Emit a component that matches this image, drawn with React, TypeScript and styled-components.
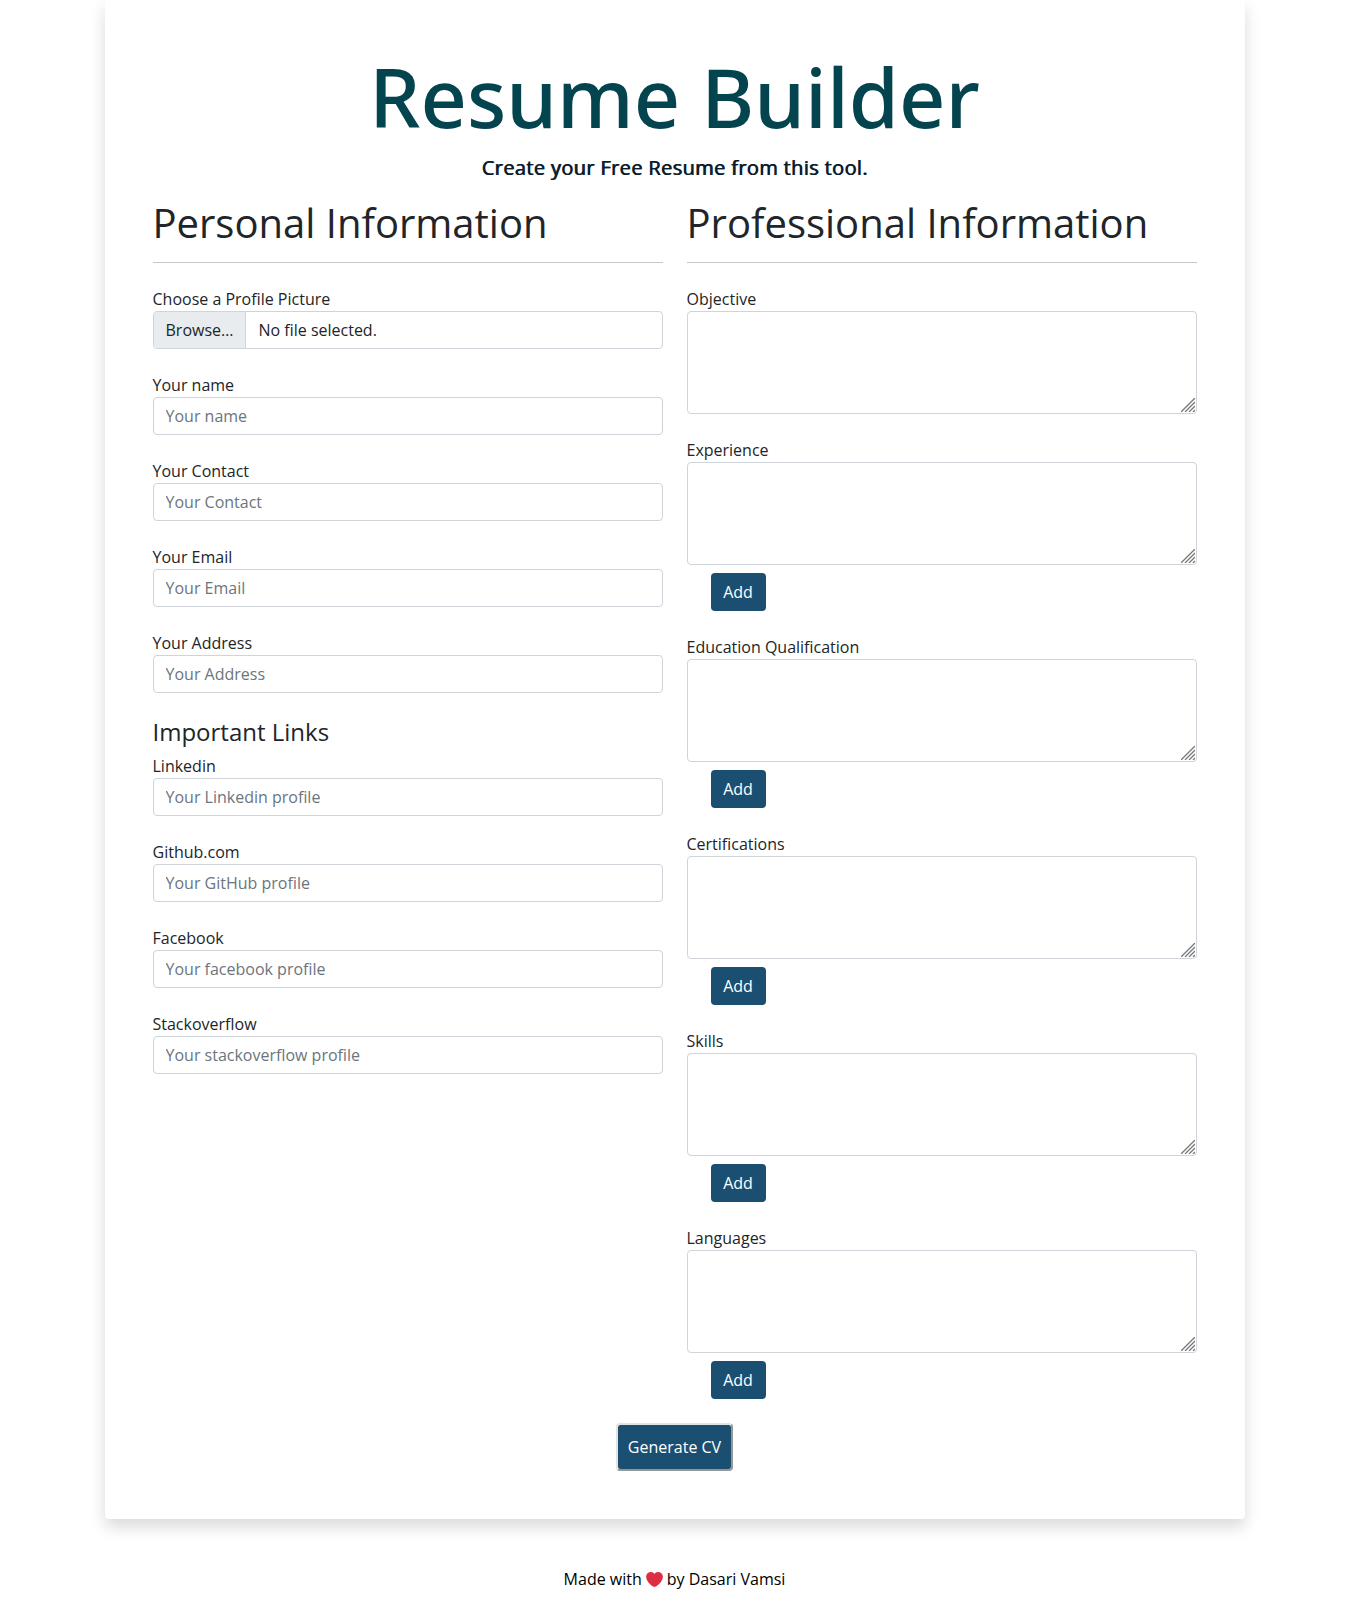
import React from 'react';
import styled, { createGlobalStyle } from 'styled-components';

const GlobalStyle = createGlobalStyle`
  *, *::before, *::after { box-sizing: border-box; }
  body {
    margin: 0;
    background: #fff;
    color: #212529;
    font-family: "Open Sans", "Noto Sans", sans-serif;
    font-size: 16px;
    line-height: 1.5;
  }
`;

const Card = styled.main`
  width: 1140px;
  margin: 0 auto;
  padding: 48px;
  border-radius: 4px;
  background: #fff;
  box-shadow: 0 8px 16px rgba(0, 0, 0, 0.15);
`;

const Title = styled.h1`
  margin: 0 0 8px;
  color: #03444f;
  font-family: "Noto Sans", "Open Sans", sans-serif;
  font-size: 81px;
  font-weight: 500;
  line-height: 97px;
  text-align: center;
`;

const Subtitle = styled.p`
  margin: 0 0 16px;
  color: #0b1c2c;
  font-size: 20px;
  font-weight: 400;
  letter-spacing: 0.36px;
  line-height: 30px;
  text-align: center;
  text-shadow: 0.8px 0 0 #0b1c2c;
`;

const Columns = styled.div`
  display: grid;
  grid-template-columns: 1fr 1fr;
  column-gap: 24px;
`;

const Column = styled.section`
  min-width: 0;
`;

const ColumnTitle = styled.h2`
  margin: 0 0 24px;
  padding-bottom: 15px;
  border-bottom: 1px solid #c7c8c9;
  font-size: 40px;
  font-weight: 400;
  line-height: 48px;
`;

const LinksTitle = styled.h3`
  margin: 0 0 6px;
  font-size: 24px;
  font-weight: 400;
  line-height: 30.8px;
`;

const Field = styled.div`
  display: flex;
  flex-direction: column;
  margin-bottom: 24px;
`;

const Label = styled.label`
  height: 24px;
`;

const Input = styled.input`
  width: 100%;
  height: 38px;
  padding: 6px 12px;
  border: 1px solid #ced4da;
  border-radius: 4px;
  background: #fff;
  color: #212529;
  font: inherit;
  &::placeholder { color: #6c757d; opacity: 1; }
`;

const FilePicker = styled.div`
  display: flex;
  height: 38px;
  overflow: hidden;
  border: 1px solid #ced4da;
  border-radius: 4px;
`;

const BrowseButton = styled.span`
  padding: 6px 12px;
  border-right: 1px solid #ced4da;
  background: #e9ecef;
`;

const FileName = styled.span`
  padding: 6px 12px;
`;

const AreaFrame = styled.div`
  position: relative;
  height: 103px;
`;

const TextArea = styled.textarea`
  display: block;
  width: 100%;
  height: 103px;
  padding: 6px 12px;
  border: 1px solid #ced4da;
  border-radius: 4px;
  background: #fff;
  font: inherit;
  resize: none;
`;

const Grip = styled.svg`
  position: absolute;
  right: 2px;
  bottom: 2px;
  pointer-events: none;
`;

const AddButton = styled.button`
  align-self: flex-start;
  width: 55px;
  height: 38px;
  margin: 8px 0 0 24px;
  padding: 0;
  border: 0;
  border-radius: 4px;
  background: #1b4f72;
  color: #fff;
  font: inherit;
`;

const Actions = styled.div`
  display: flex;
  justify-content: center;
`;

const GenerateButton = styled.button`
  height: 48px;
  padding: 10px;
  border: 2px solid;
  border-color: #e3e3e3 #979797 #979797 #e3e3e3;
  border-radius: 4px;
  background: #1b4f72;
  background-clip: padding-box;
  color: #fff;
  font: inherit;
`;

const Footer = styled.footer`
  display: flex;
  align-items: center;
  justify-content: center;
  gap: 4px;
  height: 24px;
  margin-top: 48px;
  color: #000;
`;

const personal = [
  ['Your name', 'Your name'],
  ['Your Contact', 'Your Contact'],
  ['Your Email', 'Your Email'],
  ['Your Address', 'Your Address'],
];

const links = [
  ['Linkedin', 'Your Linkedin profile'],
  ['Github.com', 'Your GitHub profile'],
  ['Facebook', 'Your facebook profile'],
  ['Stackoverflow', 'Your stackoverflow profile'],
];

const sections = ['Experience', 'Education Qualification', 'Certifications', 'Skills', 'Languages'];

function TextField({ label, placeholder }: { label: string; placeholder: string }) {
  return (
    <Field>
      <Label>{label}</Label>
      <Input type="text" placeholder={placeholder} />
    </Field>
  );
}

function AreaField({ label, addable }: { label: string; addable?: boolean }) {
  return (
    <Field>
      <Label>{label}</Label>
      <AreaFrame>
        <TextArea />
        <Grip width="14" height="14" viewBox="0 0 14 14" stroke="#777" strokeWidth="1.3">
          <path d="M0 14 14 0M4 14 14 4M8 14 14 8M12 14 14 12" />
        </Grip>
      </AreaFrame>
      {addable && <AddButton type="button">Add</AddButton>}
    </Field>
  );
}

export default function App() {
  return (
    <>
      <GlobalStyle />
      <Card>
        <Title>Resume Builder</Title>
        <Subtitle>Create your Free Resume from this tool.</Subtitle>
        <Columns>
          <Column>
            <ColumnTitle>Personal Information</ColumnTitle>
            <Field>
              <Label>Choose a Profile Picture</Label>
              <FilePicker>
                <BrowseButton>Browse…</BrowseButton>
                <FileName>No file selected.</FileName>
              </FilePicker>
            </Field>
            {personal.map(([label, placeholder]) => (
              <TextField key={label} label={label} placeholder={placeholder} />
            ))}
            <LinksTitle>Important Links</LinksTitle>
            {links.map(([label, placeholder]) => (
              <TextField key={label} label={label} placeholder={placeholder} />
            ))}
          </Column>
          <Column>
            <ColumnTitle>Professional Information</ColumnTitle>
            <AreaField label="Objective" />
            {sections.map((label) => (
              <AreaField key={label} label={label} addable />
            ))}
          </Column>
        </Columns>
        <Actions>
          <GenerateButton type="button">Generate CV</GenerateButton>
        </Actions>
      </Card>
      <Footer>
        <span>Made with</span>
        <svg width="17" height="15" viewBox="0 2 36 32" aria-hidden="true">
          <path
            fill="#dd2e44"
            d="M35.885 11.833c0-5.45-4.418-9.868-9.867-9.868-3.308 0-6.227 1.633-8.018 4.129-1.791-2.496-4.71-4.129-8.017-4.129-5.45 0-9.868 4.417-9.868 9.868 0 .772.098 1.52.266 2.241C1.751 22.587 11.216 31.568 18 34.034c6.783-2.466 16.249-11.447 17.617-19.959.17-.721.268-1.469.268-2.242z"
          />
        </svg>
        <span>by Dasari Vamsi</span>
      </Footer>
    </>
  );
}
